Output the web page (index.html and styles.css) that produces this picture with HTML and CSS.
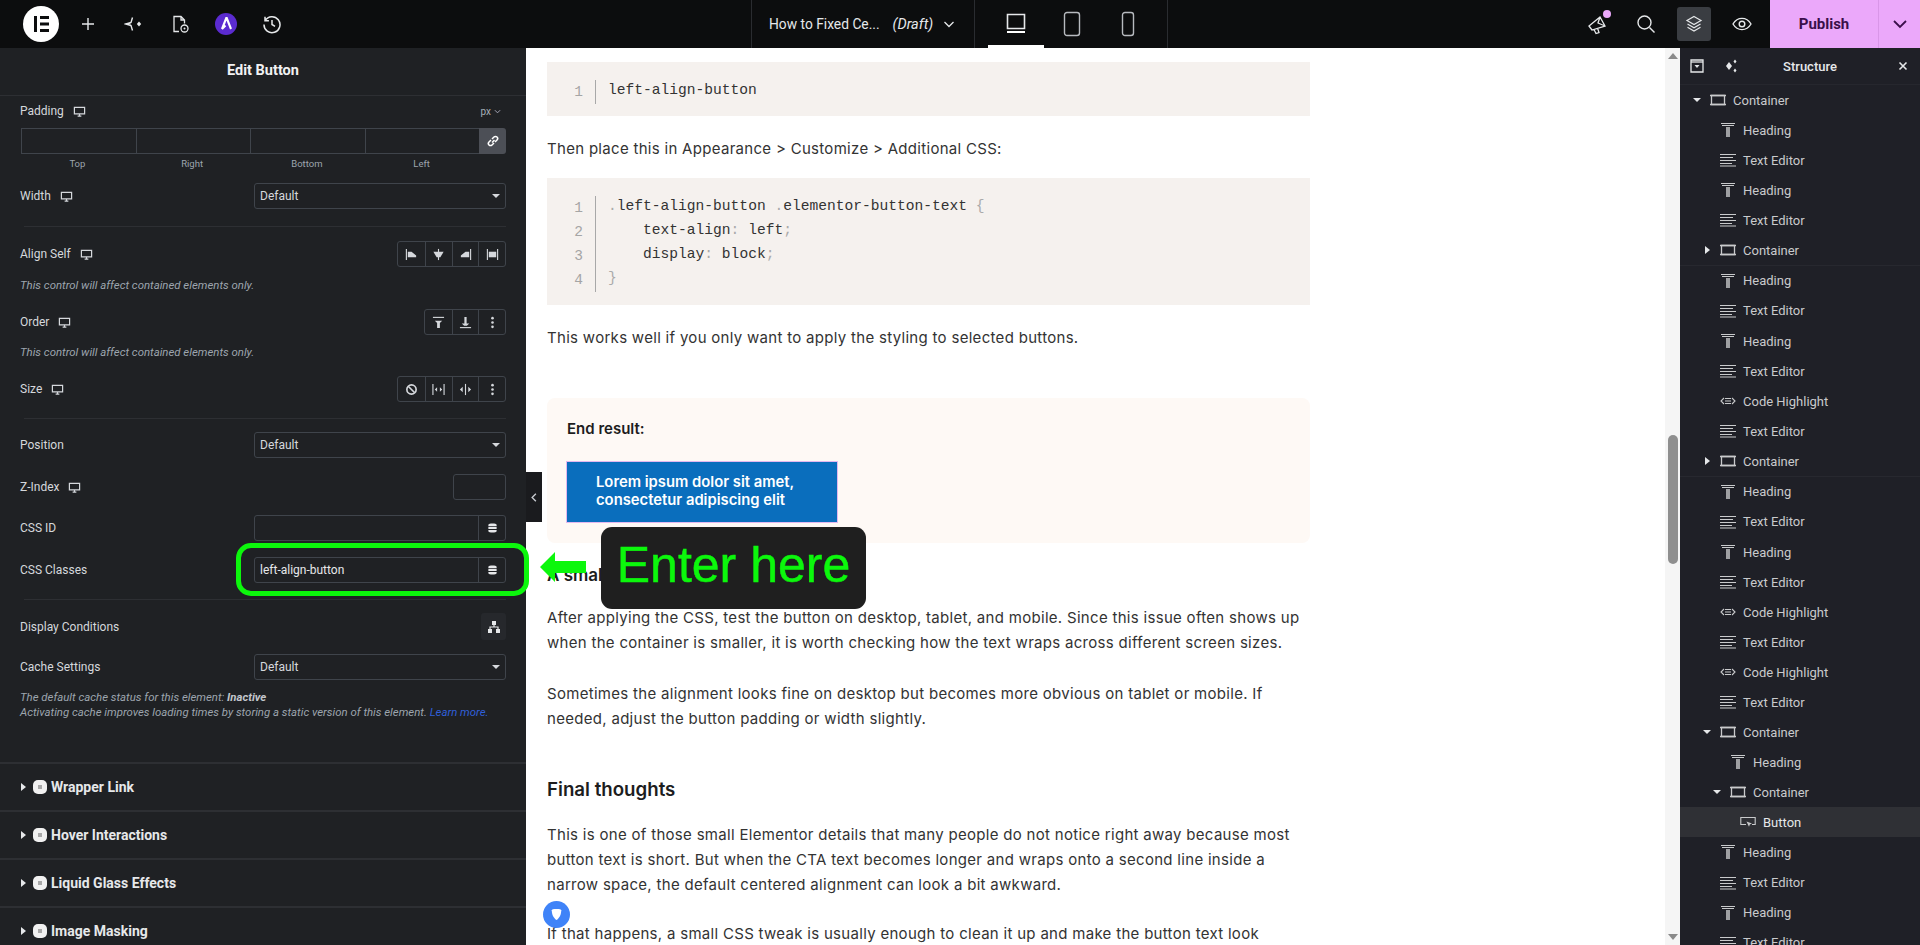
FILE: index.html
```html
<!DOCTYPE html>
<html lang="en">
<head>
    <meta charset="UTF-8">
    <title>Edit Button</title>
    <link rel="stylesheet" href="styles.css">
</head>
<body>
    <svg class="sprites" xmlns="http://www.w3.org/2000/svg">
        <symbol id="i-desktop" viewBox="0 0 14 14"><path d="M1.5 2.5h11v7h-11zM5 12h4M7 9.5V12" fill="none" stroke="currentColor" stroke-width="1.3"/></symbol>
        <symbol id="i-heading" viewBox="0 0 16 16"><path d="M1 1.500h14M2 3.500h12" fill="none" stroke="currentColor" stroke-width="1.100"/><path d="M6 5h4v10H6z" fill="currentColor" opacity=".75"/></symbol>
        <symbol id="i-text" viewBox="0 0 16 16"><path d="M0 2.5h16M0 5.5h13M0 8.5h16M0 11.5h12M0 14h16" fill="none" stroke="currentColor" stroke-width="1.1"/></symbol>
        <symbol id="i-container" viewBox="0 0 16 16"><path d="M1.500 3.500h13v9h-13z" fill="none" stroke="currentColor" stroke-width="1.300"/><path d="M0 3.500h16M0 12.500h16" stroke="currentColor" stroke-width="1.300"/></symbol>
        <symbol id="i-code" viewBox="0 0 16 16"><path d="M4 5 1 8l3 3M12 5l3 3-3 3" fill="none" stroke="currentColor" stroke-width="1.1"/><path d="M5 5.5h6M5 8h6M5 10.5h6" stroke="currentColor" stroke-width="1.2"/></symbol>
        <symbol id="i-button" viewBox="0 0 16 16"><path d="M6 10.5H.8v-7h14.4v7H12" fill="none" stroke="currentColor" stroke-width="1.1"/><path d="M6.5 7.5 12 9.5l-2.2.9-.8 2.3z" fill="currentColor"/></symbol>
        <symbol id="i-db" viewBox="0 0 12 12"><path d="M1.5 2.5C1.5.5 10.5.5 10.5 2.5v1.6h-9zM1.5 5h9v2.2h-9zM1.5 8.1h9v1.4c0 2-9 2-9 0z" fill="currentColor"/></symbol>
        <symbol id="i-dots" viewBox="0 0 12 12"><circle cx="6" cy="2" r="1.2" fill="currentColor"/><circle cx="6" cy="6" r="1.2" fill="currentColor"/><circle cx="6" cy="10" r="1.2" fill="currentColor"/></symbol>
    </svg>

    <!-- top bar -->
    <header class="topbar">
        <div class="logo">
            <svg viewBox="0 0 36 36" width="36" height="36"><circle cx="18" cy="18" r="18" fill="#fff"/><path d="M11 10h3v16h-3zM17 10h9v3h-9zM17 16.5h9v3h-9zM17 23h9v3h-9z" fill="#0c0d0e"/></svg>
        </div>
        <div class="tool-slot">
            <svg viewBox="0 0 16 16" width="16" height="16"><path d="M8 2v12M2 8h12" stroke="#e6e8ea" stroke-width="1.4"/></svg>
        </div>
        <div class="tool-slot">
            <svg viewBox="0 0 20 20" width="20" height="20"><path d="M8.5 3.5 7 8.5 1.5 10 7 11.5l1.5 5M7 8.5 3.5 10 7 11.5" fill="none" stroke="#e6e8ea" stroke-width="1.4"/><path d="M15 7.5l2.2 2.5-2.2 2.5-2.2-2.5z" fill="#e6e8ea"/></svg>
        </div>
        <div class="tool-slot">
            <svg viewBox="0 0 20 20" width="20" height="20"><path d="M9 17.5H4v-15h7l3.5 3.5v3.5M11 2.5V6h3.5" fill="none" stroke="#e6e8ea" stroke-width="1.3"/><circle cx="14.5" cy="14.5" r="3.5" fill="none" stroke="#e6e8ea" stroke-width="1.3"/><circle cx="14.5" cy="14.5" r="1" fill="#e6e8ea"/></svg>
        </div>
        <div class="tool-slot">
            <span class="astra">
                <svg viewBox="0 0 20 20" width="20" height="20"><path d="M10.5 3.5 6 15l3.5-3.5M10.5 3.5 15 15" fill="none" stroke="#fff" stroke-width="2.1"/></svg>
            </span>
        </div>
        <div class="tool-slot">
            <svg viewBox="0 0 20 20" width="20" height="20"><path d="M3.2 6.5A8 8 0 1 1 2 10.5M3 2.8v3.9h3.9M10 6v4.5l3 1.8" fill="none" stroke="#e6e8ea" stroke-width="1.5"/></svg>
        </div>

        <div class="doc-title">
            <span>How to Fixed Ce...</span>
            <em>(Draft)</em>
            <svg viewBox="0 0 12 12" width="12" height="12"><path d="M1.5 4 6 8.5 10.5 4" fill="none" stroke="#e6e8ea" stroke-width="1.3"/></svg>
        </div>
        <div class="devices">
            <div class="device is-active">
                <svg viewBox="0 0 20 24" width="20" height="24"><path d="M1.5 3.5h17v14h-17z" fill="none" stroke="#e6e8ea" stroke-width="1.6"/><path d="M1 21h18" stroke="#fff" stroke-width="2"/></svg>
            </div>
            <div class="device">
                <svg viewBox="0 0 18 26" width="18" height="26"><rect x="1.5" y="1.5" width="15" height="23" rx="2.5" fill="none" stroke="#b7babf" stroke-width="1.4"/></svg>
            </div>
            <div class="device">
                <svg viewBox="0 0 14 26" width="14" height="26"><rect x="1.5" y="1.5" width="11" height="23" rx="2.5" fill="none" stroke="#b7babf" stroke-width="1.4"/></svg>
            </div>
        </div>

        <div class="top-actions">
            <div class="tool-slot wide">
                <svg viewBox="0 0 24 24" width="24" height="24"><path d="M3 14 14 5l5 9-13 4zM14 5l-2 6 7 3M8 17.500l2 4 3-1-1.500-4.500M3 14l3 4" fill="none" stroke="#e6e8ea" stroke-width="1.300"/></svg>
                <span class="notify-dot"></span>
            </div>
            <div class="tool-slot wide">
                <svg viewBox="0 0 20 20" width="20" height="20"><circle cx="8.5" cy="8.5" r="6.5" fill="none" stroke="#e6e8ea" stroke-width="1.4"/><path d="m13.5 13.5 5 5" stroke="#e6e8ea" stroke-width="1.4"/></svg>
            </div>
            <div class="tool-slot wide">
                <span class="layers-box">
                    <svg viewBox="0 0 18 18" width="18" height="18"><path d="M9 1.5 16 5.5 9 9.5 2 5.5zM2.5 9 9 12.7 15.5 9M2.5 12.3 9 16l6.5-3.7" fill="none" stroke="#e6e8ea" stroke-width="1.2"/></svg>
                </span>
            </div>
            <div class="tool-slot wide">
                <svg viewBox="0 0 20 14" width="20" height="14"><path d="M1 7c4.5-7.500 13.500-7.500 18 0-4.500 7.500-13.500 7.500-18 0z" fill="none" stroke="#e6e8ea" stroke-width="1.4"/><circle cx="10" cy="7" r="2.800" fill="none" stroke="#e6e8ea" stroke-width="1.4"/></svg>
            </div>
        </div>
        <div class="publish">
            <span class="publish-label">Publish</span>
            <span class="publish-more">
                <svg viewBox="0 0 14 14" width="14" height="14"><path d="M1 4l6 6 6-6" fill="none" stroke="#3a0f4a" stroke-width="1.8"/></svg>
            </span>
        </div>
    </header>

    <div class="workspace">
        <!-- left settings panel -->
        <aside class="panel">
            <div class="panel-head">Edit Button</div>
            <div class="panel-body">
                <div class="padding-head">
                    <label class="ctl-label">Padding <svg class="resp"><use href="#i-desktop"/></svg></label>
                    <span class="unit">px <svg viewBox="0 0 8 8" width="7" height="7"><path d="M1 2.500 4 5.500 7 2.500" fill="none" stroke="#aab" stroke-width="1.100"/></svg></span>
                </div>
                <div class="dimensions mt7">
                    <div class="dim-cell"></div>
                    <div class="dim-cell"></div>
                    <div class="dim-cell"></div>
                    <div class="dim-cell"></div>
                    <div class="dim-link">
                        <svg viewBox="0 0 14 14" width="14" height="14"><path d="M6 8.500 8.500 6M5 6 3 8a2.100 2.100 0 0 0 3 3l2-2M6 5l2-2a2.100 2.100 0 0 1 3 3L9 8" fill="none" stroke="#fff" stroke-width="1.500"/></svg>
                    </div>
                </div>
                <div class="dim-labels mt4">
                    <span>Top</span><span>Right</span><span>Bottom</span><span>Left</span>
                </div>

                <div class="row mt13">
                    <label class="ctl-label">Width <svg class="resp"><use href="#i-desktop"/></svg></label>
                    <div class="select">Default<span class="select-caret"></span></div>
                </div>
                <div class="divider mt17"></div>

                <div class="row mt14">
                    <label class="ctl-label">Align Self <svg class="resp"><use href="#i-desktop"/></svg></label>
                    <div class="btn-group">
                        <span><svg viewBox="0 0 14 14"><path d="M1.500 1v12" stroke="currentColor" stroke-width="1.200"/><path d="M3 4h4l5 4v2H3z" fill="currentColor"/></svg></span>
                        <span><svg viewBox="0 0 14 14"><path d="M7 1v12" stroke="currentColor" stroke-width="1.200"/><path d="M1.500 4h11L9 10H5z" fill="currentColor"/></svg></span>
                        <span><svg viewBox="0 0 14 14"><path d="M12.500 1v12" stroke="currentColor" stroke-width="1.200"/><path d="M11 4H7L2 8v2h9z" fill="currentColor"/></svg></span>
                        <span><svg viewBox="0 0 14 14"><path d="M1.500 1v12M12.500 1v12" stroke="currentColor" stroke-width="1.200"/><path d="M3 4h8v6H3z" fill="currentColor"/></svg></span>
                    </div>
                </div>
                <p class="hint mt11">This control will affect contained elements only.</p>

                <div class="row mt17">
                    <label class="ctl-label">Order <svg class="resp"><use href="#i-desktop"/></svg></label>
                    <div class="btn-group">
                        <span><svg viewBox="0 0 14 14"><path d="M1 1.500h12" stroke="currentColor" stroke-width="1.200"/><path d="M3 5h8L8.500 7.500V13h-3V7.500z" fill="currentColor"/></svg></span>
                        <span><svg viewBox="0 0 14 14"><path d="M1 12.500h12" stroke="currentColor" stroke-width="1.200"/><path d="M3 8h8L8.500 10.500h-3zM5.800 1h2.400v8H5.800z" fill="currentColor"/></svg></span>
                        <span><svg><use href="#i-dots"/></svg></span>
                    </div>
                </div>
                <p class="hint mt10">This control will affect contained elements only.</p>

                <div class="row mt17">
                    <label class="ctl-label">Size <svg class="resp"><use href="#i-desktop"/></svg></label>
                    <div class="btn-group">
                        <span><svg viewBox="0 0 14 14"><circle cx="7" cy="7" r="5" fill="none" stroke="currentColor" stroke-width="1.800"/><path d="m3.500 3.500 7 7" stroke="currentColor" stroke-width="1.800"/></svg></span>
                        <span><svg viewBox="0 0 14 14"><path d="M1 1v12M13 1v12" stroke="currentColor" stroke-width="1.200"/><path d="M3 7l2.500-2.500v5zM11 7 8.500 4.500v5z" fill="currentColor"/></svg></span>
                        <span><svg viewBox="0 0 14 14"><path d="M7 1v12" stroke="currentColor" stroke-width="1.200"/><path d="M1 7l3-3v6zM13 7l-3-3v6z" fill="currentColor"/></svg></span>
                        <span><svg><use href="#i-dots"/></svg></span>
                    </div>
                </div>
                <div class="divider mt16"></div>

                <div class="row mt13">
                    <label class="ctl-label">Position</label>
                    <div class="select">Default<span class="select-caret"></span></div>
                </div>
                <div class="row mt16">
                    <label class="ctl-label">Z-Index <svg class="resp"><use href="#i-desktop"/></svg></label>
                    <div class="input input-small"></div>
                </div>
                <div class="row mt15">
                    <label class="ctl-label">CSS ID</label>
                    <div class="input input-dynamic">
                        <span class="input-value"></span>
                        <span class="input-tag"><svg><use href="#i-db"/></svg></span>
                    </div>
                </div>
                <div class="row mt16">
                    <label class="ctl-label">CSS Classes</label>
                    <div class="input input-dynamic">
                        <span class="input-value">left-align-button</span>
                        <span class="input-tag"><svg><use href="#i-db"/></svg></span>
                    </div>
                </div>
                <div class="divider mt16"></div>

                <div class="row mt13 row-tall">
                    <label class="ctl-label">Display Conditions</label>
                    <div class="cond-btn">
                        <svg viewBox="0 0 14 14" width="14" height="14"><path d="M5 1h4v4H5zM1 9h4v4H1zM9 9h4v4H9z" fill="currentColor"/><path d="M7 5v2M3 9V7h8v2" fill="none" stroke="currentColor" stroke-width="1.200"/></svg>
                    </div>
                </div>
                <div class="row mt14">
                    <label class="ctl-label">Cache Settings</label>
                    <div class="select">Default<span class="select-caret"></span></div>
                </div>
                <p class="hint note mt10">The default cache status for this element: <b>Inactive</b><br>Activating cache improves loading times by storing a static version of this element. <a>Learn more.</a></p>
            </div>

            <div class="sections">
                <div class="section"><span class="section-caret"></span><span class="pro-badge"></span>Wrapper Link</div>
                <div class="section"><span class="section-caret"></span><span class="pro-badge"></span>Hover Interactions</div>
                <div class="section"><span class="section-caret"></span><span class="pro-badge"></span>Liquid Glass Effects</div>
                <div class="section"><span class="section-caret"></span><span class="pro-badge"></span>Image Masking</div>
            </div>
        </aside>

        <!-- page preview -->
        <main class="canvas">
            <div class="article">
                <div class="code-block first">
                    <div class="gutter">1</div>
                    <pre class="code">left-align-button</pre>
                </div>
                <p class="para m20">Then place this in Appearance &gt; Customize &gt; Additional CSS:</p>
                <div class="code-block tall m17">
                    <div class="gutter">1<br>2<br>3<br>4</div>
                    <pre class="code"><i>.</i>left-align-button <i>.</i>elementor-button-text <i>{</i>
    text-align<i>:</i> left<i>;</i>
    display<i>:</i> block<i>;</i>
<i>}</i></pre>
                </div>
                <p class="para m20">This works well if you only want to apply the styling to selected buttons.</p>

                <div class="result-box">
                    <div class="result-title">End result:</div>
                    <a class="demo-button">Lorem ipsum dolor sit amet,<br>consectetur adipiscing elit</a>
                </div>

                <h3 class="subhead m20">A small check</h3>
                <p class="para m18">After applying the CSS, test the button on desktop, tablet, and mobile. Since this issue often shows up<br>when the container is smaller, it is worth checking how the text wraps across different screen sizes.</p>
                <p class="para m26">Sometimes the alignment looks fine on desktop but becomes more obvious on tablet or mobile. If<br>needed, adjust the button padding or width slightly.</p>

                <h3 class="subhead large m45">Final thoughts</h3>
                <p class="para m18">This is one of those small Elementor details that many people do not notice right away because most<br>button text is short. But when the CTA text becomes longer and wraps onto a second line inside a<br>narrow space, the default centered alignment can look a bit awkward.</p>
                <p class="para m24">If that happens, a small CSS tweak is usually enough to clean it up and make the button text look</p>
            </div>
            <div class="scrollbar">
                <span class="scroll-up"></span>
                <span class="scroll-thumb"></span>
                <span class="scroll-down"></span>
            </div>
        </main>

        <!-- structure panel -->
        <aside class="structure">
            <div class="structure-head">
                <svg class="sh-icon" viewBox="0 0 14 14" width="14" height="14"><path d="M1 1h12v12H1z" fill="none" stroke="#e6e8ea" stroke-width="1.300"/><path d="M1 3h12" stroke="#e6e8ea" stroke-width="1.300"/><path d="M4.500 6h5L7 9z" fill="#e6e8ea"/></svg>
                <svg class="sh-icon sparkle" viewBox="0 0 14 14" width="14" height="14"><path d="M5 3 8 7 5 11 2 7z" fill="#e6e8ea"/><path d="M11 .5 12.500 2.500 11 4.500 9.500 2.500zM11 9.500 12.500 11.500 11 13.500 9.500 11.500z" fill="#e6e8ea"/></svg>
                <span class="structure-title">Structure</span>
                <svg class="sh-close" viewBox="0 0 10 10" width="10" height="10"><path d="m1.500 1.500 7 7m0-7-7 7" stroke="#e6e8ea" stroke-width="1.600"/></svg>
            </div>
            <ul class="tree">
                <li class="node"><span class="caret open"></span><svg><use href="#i-container"/></svg>Container</li>
                <li class="node l1"><span class="caret"></span><svg><use href="#i-heading"/></svg>Heading</li>
                <li class="node l1"><span class="caret"></span><svg><use href="#i-text"/></svg>Text Editor</li>
                <li class="node l1"><span class="caret"></span><svg><use href="#i-heading"/></svg>Heading</li>
                <li class="node l1"><span class="caret"></span><svg><use href="#i-text"/></svg>Text Editor</li>
                <li class="node l1 folded"><span class="caret shut"></span><svg><use href="#i-container"/></svg>Container</li>
                <li class="node l1"><span class="caret"></span><svg><use href="#i-heading"/></svg>Heading</li>
                <li class="node l1"><span class="caret"></span><svg><use href="#i-text"/></svg>Text Editor</li>
                <li class="node l1"><span class="caret"></span><svg><use href="#i-heading"/></svg>Heading</li>
                <li class="node l1"><span class="caret"></span><svg><use href="#i-text"/></svg>Text Editor</li>
                <li class="node l1"><span class="caret"></span><svg><use href="#i-code"/></svg>Code Highlight</li>
                <li class="node l1"><span class="caret"></span><svg><use href="#i-text"/></svg>Text Editor</li>
                <li class="node l1 folded"><span class="caret shut"></span><svg><use href="#i-container"/></svg>Container</li>
                <li class="node l1"><span class="caret"></span><svg><use href="#i-heading"/></svg>Heading</li>
                <li class="node l1"><span class="caret"></span><svg><use href="#i-text"/></svg>Text Editor</li>
                <li class="node l1"><span class="caret"></span><svg><use href="#i-heading"/></svg>Heading</li>
                <li class="node l1"><span class="caret"></span><svg><use href="#i-text"/></svg>Text Editor</li>
                <li class="node l1"><span class="caret"></span><svg><use href="#i-code"/></svg>Code Highlight</li>
                <li class="node l1"><span class="caret"></span><svg><use href="#i-text"/></svg>Text Editor</li>
                <li class="node l1"><span class="caret"></span><svg><use href="#i-code"/></svg>Code Highlight</li>
                <li class="node l1"><span class="caret"></span><svg><use href="#i-text"/></svg>Text Editor</li>
                <li class="node l1"><span class="caret open"></span><svg><use href="#i-container"/></svg>Container</li>
                <li class="node l2"><span class="caret"></span><svg><use href="#i-heading"/></svg>Heading</li>
                <li class="node l2"><span class="caret open"></span><svg><use href="#i-container"/></svg>Container</li>
                <li class="node l3 selected"><span class="caret"></span><svg><use href="#i-button"/></svg>Button</li>
                <li class="node l1"><span class="caret"></span><svg><use href="#i-heading"/></svg>Heading</li>
                <li class="node l1"><span class="caret"></span><svg><use href="#i-text"/></svg>Text Editor</li>
                <li class="node l1"><span class="caret"></span><svg><use href="#i-heading"/></svg>Heading</li>
                <li class="node l1"><span class="caret"></span><svg><use href="#i-text"/></svg>Text Editor</li>
            </ul>
        </aside>
    </div>

    <!-- things lying over the panels -->
    <div class="collapse-tab">
        <svg viewBox="0 0 8 12" width="6" height="9"><path d="M6.500 1 1.500 6l5 5" fill="none" stroke="#c8cbd0" stroke-width="1.800"/></svg>
    </div>
    <div class="green-frame"></div>
    <svg class="green-arrow" viewBox="0 0 46 30" width="46" height="30"><path d="M0 15 15 0v9h31v12H15v9z" fill="#0cf70c"/></svg>
    <div class="enter-note">Enter here</div>
    <div class="chat-bubble">
        <svg viewBox="0 0 14 16" width="11" height="13"><path d="M1 2.500C1 1.500 3 1 7 1s6 .5 6 1.500C13 9 10 13 7 15 4 13 1 9 1 2.500z" fill="#fff"/></svg>
    </div>
</body>
</html>
```

FILE: styles.css
```css
* {
    box-sizing: border-box;
    margin: 0;
    padding: 0;
}

html, body {
    height: 945px;
    overflow: hidden;
}

body {
    background: #fff;
    color: #d5d8dc;
    font-family: Roboto, "Liberation Sans", sans-serif;
    font-size: 12px;
}

.sprites {
    display: none;
}

/* top bar */
.topbar {
    display: flex;
    align-items: center;
    height: 48px;
    background: #0c0d0e;
}

.logo {
    display: flex;
    width: 36px;
    height: 36px;
    margin-left: 23px;
    margin-right: 6px;
}

.tool-slot {
    position: relative;
    display: flex;
    align-items: center;
    justify-content: center;
    width: 46px;
    height: 48px;
}

.tool-slot.wide {
    width: 48px;
}

.astra {
    display: flex;
    align-items: center;
    justify-content: center;
    width: 22px;
    height: 22px;
    border-radius: 50%;
    background: #5b2bd0;
}

.doc-title {
    display: flex;
    align-items: center;
    width: 224px;
    height: 48px;
    margin-left: 456px;
    padding-left: 17px;
    border-left: 1px solid #2a2c30;
    border-right: 1px solid #2a2c30;
    color: #e6e8ea;
    font-size: 13.800px;
}

.doc-title em {
    margin-left: 13px;
    margin-right: 10px;
    font-size: 14.500px;
}

.devices {
    display: flex;
    width: 193px;
    height: 48px;
    padding-left: 13px;
    border-right: 1px solid #2a2c30;
}

.device {
    display: flex;
    align-items: center;
    justify-content: center;
    width: 56px;
    height: 48px;
}

.device.is-active {
    border-bottom: 3px solid #fff;
    padding-top: 1px;
}

.top-actions {
    display: flex;
    margin-left: auto;
    margin-right: 4px;
}

.notify-dot {
    position: absolute;
    top: 10px;
    left: 29px;
    width: 8px;
    height: 8px;
    border-radius: 50%;
    background: #eba8fa;
}

.layers-box {
    display: flex;
    align-items: center;
    justify-content: center;
    width: 34px;
    height: 34px;
    border-radius: 3px;
    background: #3a3d42;
}

.publish {
    display: flex;
    width: 150px;
    height: 48px;
    background: #eba8fa;
    color: #3a0f4a;
    font-size: 15px;
    font-weight: 700;
}

.publish-label {
    display: flex;
    align-items: center;
    justify-content: center;
    width: 109px;
    border-right: 1px solid #d996e8;
}

.publish-more {
    display: flex;
    align-items: center;
    justify-content: center;
    flex: 1;
}

.workspace {
    display: flex;
    height: 897px;
}

/* left panel */
.panel {
    flex: 0 0 526px;
    background: #1f2124;
    overflow: hidden;
}

.panel-head {
    height: 48px;
    border-bottom: 1px solid #2d2f33;
    color: #f1f2f3;
    font-size: 14.500px;
    font-weight: 700;
    line-height: 46px;
    text-align: center;
}

.panel-body {
    height: 666px;
    padding: 5px 20px 0;
}

.mt4 { margin-top: 4px; }
.mt7 { margin-top: 7px; }
.mt10 { margin-top: 10px; }
.mt11 { margin-top: 11px; }
.mt13 { margin-top: 13px; }
.mt14 { margin-top: 14px; }
.mt15 { margin-top: 15px; }
.mt16 { margin-top: 16px; }
.mt17 { margin-top: 17px; }

.row {
    display: flex;
    align-items: center;
    justify-content: space-between;
    height: 26px;
}

.row-tall {
    height: 27px;
}

.ctl-label {
    display: flex;
    align-items: center;
    color: #d5d8dc;
    font-size: 12px;
}

.resp {
    width: 13px;
    height: 13px;
    margin-left: 9px;
    color: #d5d8dc;
}

.padding-head {
    display: flex;
    align-items: center;
    justify-content: space-between;
    height: 20px;
}

.unit {
    display: flex;
    align-items: center;
    gap: 3px;
    margin-right: 5px;
    color: #a4afb7;
    font-size: 10px;
}

.dimensions {
    display: flex;
    height: 26px;
    margin-left: 1px;
}

.dim-cell {
    flex: 1;
    border: 1px solid #3f444b;
    border-right: 0;
}

.dim-link {
    display: flex;
    align-items: center;
    justify-content: center;
    flex: 0 0 27px;
    border-radius: 0 3px 3px 0;
    background: #4c4f56;
}

.dim-labels {
    display: flex;
    height: 12px;
    padding-right: 27px;
    color: #9da5ae;
    font-size: 9.500px;
    line-height: 12px;
    text-align: center;
}

.dim-labels span {
    flex: 1;
}

.select {
    position: relative;
    width: 252px;
    height: 26px;
    padding-left: 5px;
    border: 1px solid #3f444b;
    border-radius: 3px;
    color: #d5d8dc;
    font-size: 12px;
    line-height: 24px;
}

.select-caret {
    position: absolute;
    top: 10px;
    right: 5px;
    border-top: 4px solid #d5d8dc;
    border-left: 4px solid transparent;
    border-right: 4px solid transparent;
}

.divider {
    height: 1px;
    margin-left: 4px;
    background: #2d2f33;
}

.btn-group {
    display: flex;
    height: 26px;
    border: 1px solid #3f444b;
    border-radius: 3px;
}

.btn-group span {
    display: flex;
    align-items: center;
    justify-content: center;
    width: 26.700px;
    color: #d5d8dc;
    border-left: 1px solid #3f444b;
}

.btn-group span:first-child {
    border-left: 0;
}

.btn-group svg {
    width: 13px;
    height: 13px;
}

.hint {
    color: #9da5ae;
    font-size: 11.400px;
    font-style: italic;
    line-height: 14px;
}

.note {
    line-height: 15px;
}

.note b {
    color: #c2c6cb;
}

.note a {
    color: #2f5fd8;
}

.input {
    height: 26px;
    border: 1px solid #3f444b;
    border-radius: 3px;
}

.input-small {
    width: 53px;
}

.input-dynamic {
    display: flex;
    width: 252px;
}

.input-value {
    flex: 1;
    padding-left: 5px;
    color: #e6e8ea;
    line-height: 24px;
}

.input-tag {
    display: flex;
    align-items: center;
    justify-content: center;
    width: 27px;
    border-left: 1px solid #3f444b;
}

.input-tag svg {
    width: 11px;
    height: 12px;
    color: #e6e8ea;
}

.cond-btn {
    display: flex;
    align-items: center;
    justify-content: center;
    width: 25px;
    height: 27px;
    border-radius: 3px;
    background: #26282c;
    color: #e6e8ea;
}

.section {
    display: flex;
    align-items: center;
    height: 48px;
    padding-left: 21px;
    border-top: 2px solid #2d2f33;
    color: #e6e8ea;
    font-size: 14px;
    font-weight: 700;
}

.section-caret {
    margin-right: 7px;
    border-left: 5px solid #e6e8ea;
    border-top: 4px solid transparent;
    border-bottom: 4px solid transparent;
}

.pro-badge {
    position: relative;
    width: 14px;
    height: 14px;
    margin-right: 4px;
    border-radius: 5px;
    background: #f1f1f1;
}

.pro-badge:after {
    content: "";
    position: absolute;
    top: 5px;
    left: 5px;
    width: 4px;
    height: 4px;
    background: #a9a9a9;
}

/* page preview */
.canvas {
    display: flex;
    flex: 1;
    background: #fff;
}

.article {
    flex: 1;
    padding-left: 21px;
    color: #303030;
    font-family: Inter, "Open Sans", sans-serif;
    overflow: hidden;
}

.m17 { margin-top: 17px; }
.m18 { margin-top: 18px; }
.m20 { margin-top: 20px; }
.m24 { margin-top: 24px; }
.m26 { margin-top: 26px; }
.m45 { margin-top: 45px; }

.para {
    color: #333;
    font-size: 15px;
    letter-spacing: .3px;
    line-height: 25px;
    white-space: nowrap;
}

.code-block {
    display: flex;
    width: 763px;
    padding: 18px 0 12px;
    background: #f5f1ee;
}

.code-block.first {
    margin-top: 14px;
}

.code-block.tall {
    padding-bottom: 13px;
}

.gutter {
    width: 49px;
    padding-right: 12px;
    border-right: 1px solid #a8a8a8;
    color: #a5a5a5;
    font-family: "Liberation Mono", monospace;
    font-size: 14.500px;
    line-height: 24px;
    text-align: right;
}

.code {
    margin-top: -2px;
    margin-left: 12px;
    color: #333;
    font-family: "Liberation Mono", monospace;
    font-size: 14.600px;
    line-height: 24px;
}

.code i {
    color: #aaa;
    font-style: normal;
}

.result-box {
    width: 763px;
    height: 145px;
    margin-top: 48px;
    padding: 19px 0 0 20px;
    border-radius: 8px;
    background: #fef9f5;
}

.result-title {
    color: #1d1d1d;
    font-size: 15px;
    font-weight: 600;
    line-height: 24px;
}

.demo-button {
    display: block;
    width: 270px;
    height: 60px;
    margin-top: 21px;
    padding: 11px 0 0 29px;
    background: #0a6ebd;
    box-shadow: 0 0 0 1px #e3b8ef;
    color: #fff;
    font-size: 14.800px;
    font-weight: 600;
    line-height: 18px;
}

.subhead {
    color: #1d1d1d;
    font-size: 17px;
    font-weight: 600;
    line-height: 24px;
}

.subhead.large {
    font-size: 18.700px;
    line-height: 28px;
}

.scrollbar {
    display: flex;
    flex-direction: column;
    align-items: center;
    flex: 0 0 15px;
    background: #f5f5f5;
}

.scroll-up {
    margin-top: 5px;
    border-bottom: 6px solid #8a8a8a;
    border-left: 5px solid transparent;
    border-right: 5px solid transparent;
}

.scroll-thumb {
    width: 10px;
    height: 129px;
    margin-top: 376px;
    border-radius: 5px;
    background: #8f8f8f;
}

.scroll-down {
    margin-top: auto;
    margin-bottom: 5px;
    border-top: 6px solid #8a8a8a;
    border-left: 5px solid transparent;
    border-right: 5px solid transparent;
}

/* structure panel */
.structure {
    flex: 0 0 240px;
    background: #1f2027;
    overflow: hidden;
}

.structure-head {
    display: flex;
    align-items: center;
    height: 37px;
    border-bottom: 1px solid #26272e;
}

.sh-icon {
    margin-left: 10px;
}

.sh-icon.sparkle {
    margin-left: 20px;
}

.structure-title {
    flex: 1;
    padding-right: 16px;
    color: #e6e8ea;
    font-size: 13px;
    font-weight: 500;
    text-align: center;
}

.sh-close {
    margin-right: 12px;
}

.tree {
    list-style: none;
}

.node {
    display: flex;
    align-items: center;
    height: 30.050px;
    padding-left: 12px;
    color: #c9cacc;
    font-size: 13px;
}

.node svg {
    flex: 0 0 16px;
    width: 16px;
    height: 16px;
    margin-right: 7px;
    color: #c9cacc;
}

.node.l1 { padding-left: 22px; }
.node.l2 { padding-left: 32px; }
.node.l3 { padding-left: 42px; }

.node.folded {
    height: 30.700px;
    border-bottom: 1px solid #27282f;
}

.node.selected {
    background: #2f3035;
    color: #e6e8ea;
}

/* slot before the icon, 18px wide with its gap */
.caret {
    flex: none;
    width: 10px;
    margin-right: 8px;
}

.caret.open {
    width: 8px;
    height: 4px;
    margin-left: 1px;
    margin-right: 9px;
    border-top: 4px solid #e6e8ea;
    border-left: 4px solid transparent;
    border-right: 4px solid transparent;
}

.caret.shut {
    width: 5px;
    height: 8px;
    margin-left: 3px;
    margin-right: 10px;
    border-left: 5px solid #e6e8ea;
    border-top: 4px solid transparent;
    border-bottom: 4px solid transparent;
}

/* overlays */
.collapse-tab {
    position: absolute;
    top: 472px;
    left: 526px;
    display: flex;
    align-items: center;
    justify-content: center;
    width: 16px;
    height: 50px;
    background: #1a1b1e;
}

.green-frame {
    position: absolute;
    top: 543px;
    left: 236px;
    width: 293px;
    height: 53px;
    border: 5px solid #0cf70c;
    border-radius: 15px;
}

.green-arrow {
    position: absolute;
    top: 552px;
    left: 540px;
}

.enter-note {
    position: absolute;
    top: 527px;
    left: 601px;
    width: 265px;
    height: 82px;
    border-radius: 11px;
    background: #1f1f1f;
    color: #0cf70c;
    font-family: "Liberation Sans", Arial, sans-serif;
    font-size: 50px;
    line-height: 76px;
    text-align: center;
    -webkit-text-stroke: .5px #0cf70c;
}

.chat-bubble {
    position: absolute;
    top: 901px;
    left: 543px;
    display: flex;
    align-items: center;
    justify-content: center;
    width: 27px;
    height: 27px;
    border-radius: 50%;
    background: #3f83f8;
}
```
